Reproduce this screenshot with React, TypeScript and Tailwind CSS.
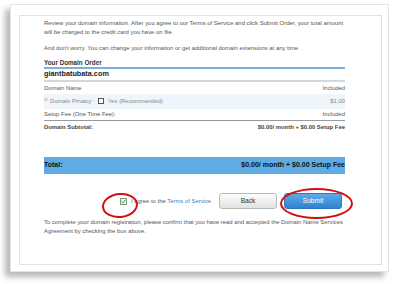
const font = { fontFamily: '"Liberation Sans", Arial, sans-serif' }

function Row({ label, value, className = '' }: { label: React.ReactNode; value: string; className?: string }) {
  return (
    <div className={`flex items-center justify-between ${className}`}>
      <span>{label}</span>
      <span>{value}</span>
    </div>
  )
}

export default function App() {
  return (
    <div className="relative w-[400px] h-[284px] bg-white overflow-hidden" style={font}>
      {/* photo frame */}
      <div className="ml-[10px] mt-[4px] w-[379px] h-[268px] bg-white border border-[#e4e4e4] shadow-[-5px_5px_6px_rgba(0,0,0,0.28)] pt-[10px] pl-[8px]">
        <div className="w-[363px] h-[250px] border border-[#e2e2e2] bg-white pl-[24px] pr-[36px] pt-[3px] text-[5.9px] text-[#555]">
          <p className="leading-[9px]">
            Review your domain information. After you agree to our Terms of Service and click Submit Order, your total amount will be charged to the credit card you have on file.
          </p>
          <p className="leading-[9px] mt-[7px]">And don't worry. You can change your information or get additional domain extensions at any time.</p>

          <div className="mt-[5px] h-[11px] flex items-center font-bold text-[6.3px] text-[#333] border-b-2 border-[#7fb0d8]">Your Domain Order</div>
          <div className="h-[13px] flex items-center font-bold text-[7.3px] text-[#222] border-b-2 border-[#d6d6d6]">giantbatubata.com</div>
          <Row className="h-[12px]" label="Domain Name" value="Included" />
          <Row
            className="h-[15px] bg-[#eef5fb] text-[#888]"
            label={
              <span className="flex items-center">
                <span className="text-[4px] mr-[2px] relative -top-[1px]">☑</span>
                Domain Privacy:
                <span className="inline-block w-[6px] h-[6px] border border-[#555] ml-[5px] mr-[4px] bg-white" />
                Yes (Recommended)
              </span>
            }
            value="$1.00"
          />
          <Row className="h-[12px] border-b border-[#999]" label="Setup Fee (One Time Fee):" value="Included" />
          <div className="h-[13px] flex items-center justify-between font-bold text-[#444]">
            <span>Domain Subtotal:</span>
            <span>$0.00/ month + $0.00 Setup Fee</span>
          </div>

          <div className="mt-[23px] h-[17px] bg-[#5eace4] flex items-center justify-between font-bold text-[7px] text-[#111]">
            <span>Total:</span>
            <span>$0.00/ month + $0.00 Setup Fee</span>
          </div>

          <div className="mt-[19px] h-[16px] flex items-center whitespace-nowrap">
            <span className="ml-[76px] w-[7px] h-[7px] shrink-0 border border-[#7a9a7a] bg-[#eef6ee] flex items-center justify-center">
              <svg width="5" height="5" viewBox="0 0 10 10">
                <path d="M1.5 5.2 L4 7.8 L8.8 2" stroke="#2f8a2f" strokeWidth="1.8" fill="none" />
              </svg>
            </span>
            <span className="ml-[4px] w-[88px] shrink-0">I agree to the <span className="text-[#3b7fc4]">Terms of Service</span></span>
            <button className="w-[58px] h-[16px] shrink-0 rounded-[3px] border border-[#b8b8b8] bg-gradient-to-b from-[#fdfdfd] to-[#e2e2e2] text-[6.6px] text-[#333]">Back</button>
            <button className="ml-[7px] w-[58px] h-[16px] shrink-0 rounded-[3px] border border-[#2f78bf] bg-gradient-to-b from-[#5eaaea] to-[#2f82cf] text-[6.6px] text-white">Submit</button>
          </div>

          <p className="mt-[9px] leading-[8.5px]">
            To complete your domain registration, please confirm that you have read and accepted the Domain Name Services Agreement by checking the box above.
          </p>
        </div>
      </div>

      {/* red annotation ellipses */}
      <div className="absolute left-[102px] top-[193px] w-[36px] h-[25px] rounded-[50%] border-2 border-[#d01010] -rotate-6" />
      <div className="absolute left-[280px] top-[188px] w-[73px] h-[31px] rounded-[50%] border-2 border-[#d01010]" />
    </div>
  )
}
